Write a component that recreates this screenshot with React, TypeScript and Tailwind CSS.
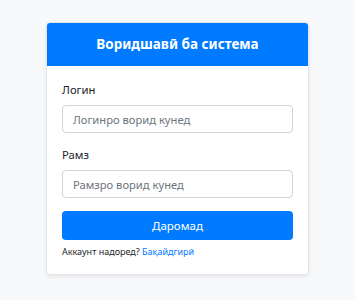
export default function App() {
  return (
    <div className="min-h-[300px] w-full bg-[#f8f9fa] pt-[22px]" style={{ fontFamily: '"Noto Sans", "Open Sans", sans-serif' }}>
      <div className="mx-auto w-[263px] overflow-hidden rounded-[4px] border border-[#e3e5e8] bg-white shadow-[0_2px_4px_rgba(0,0,0,0.08)]">
        <div className="flex h-[43px] items-center justify-center bg-[#007bff] text-[13.5px] font-bold text-white">
          Воридшавӣ ба система
        </div>
        <div className="px-[15px] pt-[14px] pb-[15px]">
          <label className="block text-[11.3px] leading-[20px] text-[#212529]">Логин</label>
          <input
            className="mt-[5px] block h-[28px] w-full rounded-[4px] border border-[#ced4da] px-[10px] text-[11.2px] text-[#495057] outline-none placeholder:text-[#6c757d]"
            placeholder="Логинро ворид кунед"
          />
          <label className="mt-[12px] block text-[11.3px] leading-[20px] text-[#212529]">Рамз</label>
          <input
            type="password"
            className="mt-[5px] block h-[28px] w-full rounded-[4px] border border-[#ced4da] px-[10px] text-[11.2px] text-[#495057] outline-none placeholder:text-[#6c757d]"
            placeholder="Рамзро ворид кунед"
          />
          <button className="mt-[13px] block h-[29px] w-full rounded-[4px] bg-[#007bff] text-[11.5px] text-white">
            Даромад
          </button>
          <p className="mt-[5px] text-[9px] leading-[14px] text-[#212529]">
            Аккаунт надоред? <a className="text-[#007bff]">Бақайдгирӣ</a>
          </p>
        </div>
      </div>
    </div>
  );
}
